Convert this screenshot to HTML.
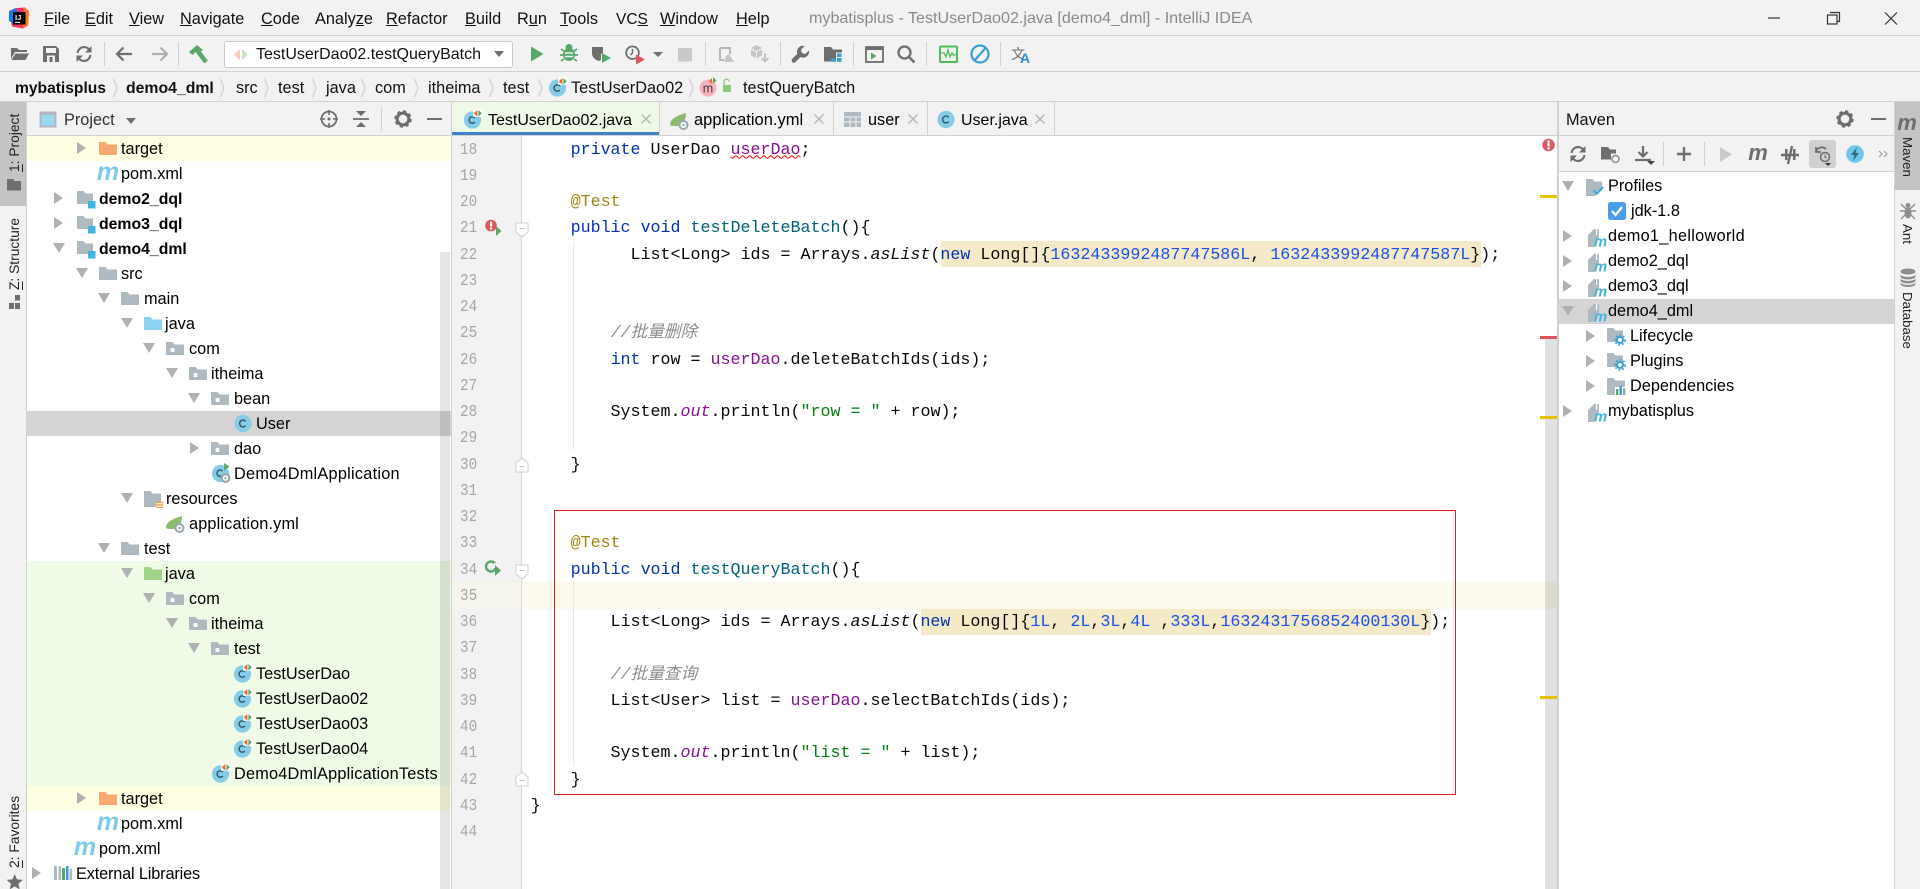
<!DOCTYPE html>
<html><head><meta charset="utf-8"><title>IntelliJ IDEA</title>
<style>
html,body{margin:0;padding:0;width:1920px;height:889px;overflow:hidden;background:#F2F2F2;font-family:"Liberation Sans","Noto Sans CJK SC",sans-serif;color:#000}
.b{position:absolute}
.t{position:absolute;white-space:nowrap;font-size:16.3px;line-height:25px}
.r{position:absolute;white-space:nowrap;font-size:16.3px;line-height:25px;height:25px;margin-top:1px}
.bo{font-weight:bold}
.mn{top:7px;color:#111}
.bc{top:76px;color:#111}
.tb{top:108px}
svg.o{position:absolute;left:0;top:0}
pre{position:absolute;margin:0;font-family:"Liberation Mono","Noto Sans CJK SC",monospace;white-space:pre}
#code{left:530.6px;top:137.6px;font-size:16.66px;line-height:26.25px;color:#080808}
#nums{left:460px;top:137.6px;font-size:17px;line-height:26.25px;color:#A6A6A6;transform:scaleX(.84);transform-origin:0 0}
.k{color:#0033B3}.n{color:#00627A}.a{color:#9E880D}.s{color:#067D17}.d{color:#1750EB}.f{color:#871094}.i{font-style:italic}.c{color:#8C8C8C;font-style:italic}
.w{text-decoration:underline wavy #f00 1px}
.vl{position:absolute;writing-mode:vertical-rl;transform:rotate(180deg);white-space:nowrap;font-size:13.8px;line-height:26px;width:26px;color:#222}
.vr{position:absolute;writing-mode:vertical-rl;white-space:nowrap;font-size:13.3px;line-height:26px;width:26px;color:#222}
</style></head><body>

<!-- structure lines -->
<div class="b" style="left:0;top:35px;width:1920px;height:1px;background:#D1D1D1"></div>
<div class="b" style="left:0;top:71px;width:1920px;height:1px;background:#D1D1D1"></div>
<div class="b" style="left:0;top:101px;width:1920px;height:1px;background:#D1D1D1"></div>
<div class="b" style="left:0;top:102px;width:26px;height:104px;background:#C4C4C4"></div>
<div class="b" style="left:26px;top:102px;width:1px;height:787px;background:#D1D1D1"></div>
<div class="b" style="left:1894px;top:102px;width:26px;height:88px;background:#C4C4C4"></div>
<div class="b" style="left:1894px;top:102px;width:1px;height:787px;background:#D1D1D1"></div>
<div class="b" style="left:27px;top:135px;width:1867px;height:1px;background:#D1D1D1"></div>

<!-- project panel -->
<div class="b" style="left:27px;top:136px;width:424px;height:753px;background:#fff"></div>
<div class="b" style="left:27px;top:136px;width:424px;height:25px;background:#FEFEE2"></div>
<div class="b" style="left:27px;top:411px;width:424px;height:25px;background:#D4D4D4"></div>
<div class="b" style="left:27px;top:561px;width:424px;height:225px;background:#EFFAE7"></div>
<div class="b" style="left:27px;top:786px;width:424px;height:25px;background:#FEFEE2"></div>
<div class="b" style="left:440px;top:252px;width:10px;height:637px;background:rgba(0,0,0,.1)"></div>
<div class="b" style="left:451px;top:102px;width:1px;height:787px;background:#D1D1D1"></div>

<!-- tabs -->
<div class="b" style="left:452px;top:102px;width:207px;height:33px;background:#EFF9E8"></div>
<div class="b" style="left:452px;top:132px;width:208px;height:3px;background:#4083C9"></div>
<div class="b" style="left:659px;top:102px;width:1px;height:33px;background:#D1D1D1"></div>
<div class="b" style="left:833px;top:102px;width:1px;height:33px;background:#D1D1D1"></div>
<div class="b" style="left:927px;top:102px;width:1px;height:33px;background:#D1D1D1"></div>
<div class="b" style="left:1054px;top:102px;width:1px;height:33px;background:#D1D1D1"></div>

<!-- editor -->
<div class="b" style="left:452px;top:136px;width:1105px;height:753px;background:#fff"></div>
<div class="b" style="left:452px;top:136px;width:69px;height:753px;background:#F2F2F2"></div>
<div class="b" style="left:521px;top:136px;width:1px;height:753px;background:#D5D5D5"></div>
<div class="b" style="left:452px;top:582px;width:69px;height:27px;background:#F6F5EC"></div>
<div class="b" style="left:522px;top:582px;width:1035px;height:27px;background:#FCFAED"></div>
<div class="b" style="left:573px;top:242px;width:1px;height:208px;background:#E8E8E8"></div>
<div class="b" style="left:573px;top:582px;width:1px;height:184px;background:#E8E8E8"></div>
<div class="b" style="left:940.6px;top:241px;width:540px;height:26px;background:#F5EAC8"></div>
<div class="b" style="left:920.6px;top:609px;width:510px;height:26px;background:#F5EAC8"></div>
<div class="b" style="left:1545px;top:337px;width:12px;height:552px;background:rgba(0,0,0,.12)"></div>
<div class="b" style="left:1557px;top:102px;width:2px;height:787px;background:#D1D1D1"></div>
<div class="b" style="left:1540px;top:195px;width:17px;height:3px;background:#E8C500"></div>
<div class="b" style="left:1540px;top:336px;width:17px;height:3px;background:#D9575C"></div>
<div class="b" style="left:1540px;top:416px;width:17px;height:3px;background:#E3C100"></div>
<div class="b" style="left:1540px;top:696px;width:17px;height:3px;background:#E3C100"></div>

<!-- maven panel -->
<div class="b" style="left:1559px;top:171px;width:335px;height:1px;background:#D1D1D1"></div>
<div class="b" style="left:1559px;top:172px;width:335px;height:717px;background:#fff"></div>
<div class="b" style="left:1559px;top:299px;width:335px;height:25px;background:#D4D4D4"></div>
<div class="b" style="left:1809px;top:140px;width:27px;height:28px;background:#D0D0D0;border-radius:3px"></div>

<!-- run config box -->
<div class="b" style="left:224px;top:41px;width:287px;height:25px;background:#fff;border:1px solid #C9C9C9;border-radius:3px"></div>

<!-- red annotation -->
<div class="b" style="left:554px;top:510px;width:900px;height:283px;border:1px solid #ED1C24"></div>

<svg class="o" width="1920" height="889" viewBox="0 0 1920 889" xmlns="http://www.w3.org/2000/svg">
<defs>
<symbol id="ar" viewBox="0 0 12 12"><polygon points="2,0 11,6 2,12" fill="#AFB1B3"/></symbol>
<symbol id="ad" viewBox="0 0 12 12"><polygon points="0,1 12,1 6,11" fill="#AFB1B3"/></symbol>
<symbol id="fo" viewBox="0 0 20 20"><path fill="#AEB9C0" d="M1 4h6.5l2 2.5H19V17H1z"/></symbol>
<symbol id="pk" viewBox="0 0 20 20"><path fill="#AEB9C0" d="M1 4h6.5l2 2.5H19V17H1z"/><rect x="5.5" y="10" width="4" height="4" rx="1" fill="#fff"/></symbol>
<symbol id="fm" viewBox="0 0 20 20"><path fill="#AEB9C0" d="M1 2h6.5l2 2.5H17V15H1z"/><rect x="12" y="12" width="7.5" height="7.5" fill="#40B6E0"/></symbol>
<symbol id="fj" viewBox="0 0 20 20"><path fill="#8CD3F0" d="M1 4h6.5l2 2.5H19V17H1z"/></symbol>
<symbol id="fg" viewBox="0 0 20 20"><path fill="#A0D589" d="M1 4h6.5l2 2.5H19V17H1z"/></symbol>
<symbol id="ft" viewBox="0 0 20 20"><path fill="#F9A870" d="M1 4h6.5l2 2.5H19V17H1z"/></symbol>
<symbol id="fr" viewBox="0 0 20 20"><path fill="#AEB9C0" d="M1 3h6.5l2 2.5H18V14h-5v5H1z"/><path stroke="#EDA23B" stroke-width="1.4" d="M13 14.5h7M13 17h7M13 19.4h7"/></symbol>
<symbol id="cl" viewBox="0 0 20 20"><circle cx="10" cy="10.5" r="8.6" fill="#85CCE6"/><path d="M12.6 8.3a3.4 3.4 0 1 0 0 4.4" fill="none" stroke="#34535F" stroke-width="1.4"/></symbol>
<symbol id="ct" viewBox="0 0 20 20"><circle cx="9.5" cy="11" r="8.6" fill="#85CCE6"/><path d="M11.8 9a3.2 3.2 0 1 0 0 4" fill="none" stroke="#34535F" stroke-width="1.4"/><path fill="#fff" d="M10 0h10v8H10z" opacity=".75"/><path fill="#F26522" d="M14.3 1v6.6l-3.4-3.3z"/><path fill="#59A869" d="M15.4 1v6.6l3.4-3.3z"/></symbol>
<symbol id="ca" viewBox="0 0 20 20"><circle cx="9.5" cy="10.5" r="8.6" fill="#85CCE6"/><path d="M11.5 8a3.2 3.2 0 1 0 0 4.4" fill="none" stroke="#34535F" stroke-width="1.4"/><path fill="#59A869" d="M13 0v7.5l5.5-3.7z"/><circle cx="14.5" cy="15" r="5" fill="#9AA7B0"/><circle cx="14.5" cy="15" r="2.8" fill="#fff"/><circle cx="14.5" cy="15" r="1.2" fill="#9AA7B0"/></symbol>
<symbol id="sp" viewBox="0 0 20 20"><path fill="#8DBA6E" d="M0 15C0 9 6 6 16 3c0 6-2 12-9 13-3 0-5.500 0-7-1z"/><circle cx="13.500" cy="15" r="5" fill="#9AA7B0"/><circle cx="13.500" cy="15" r="3" fill="#fff"/><circle cx="13.500" cy="15" r="1.300" fill="#9AA7B0"/></symbol>
<symbol id="pm" viewBox="0 0 22 20"><text x="11" y="17" text-anchor="middle" font-family="Liberation Sans" font-size="25" font-weight="bold" font-style="italic" fill="#7CCBEE">m</text></symbol>
<symbol id="mm" viewBox="0 0 20 20"><path fill="#AEB9C0" d="M1 8l6-6h5v11H8v7H1z"/><rect x="9" y="2" width="1.200" height="6" fill="#fff"/><text x="13.500" y="19.500" text-anchor="middle" font-family="Liberation Sans" font-size="15" font-weight="bold" font-style="italic" fill="#40B6E0">m</text></symbol>
<symbol id="fw" viewBox="0 0 20 20"><path fill="#AEB9C0" d="M1 2h6.500l2 2.500H17V14h-6v5H1z"/><path fill="none" stroke="#40A6E0" stroke-width="2.200" d="M9 13.500l3 3 6-6.500"/></symbol>
<symbol id="fs" viewBox="0 0 20 20"><path fill="#AEB9C0" d="M1 2h6.500l2 2.500H17V11h-6v5H1z"/><circle cx="14" cy="14" r="3" fill="none" stroke="#389FD6" stroke-width="2"/><circle cx="14" cy="14" r="5" fill="none" stroke="#389FD6" stroke-width="1.600" stroke-dasharray="1.800 2"/></symbol>
<symbol id="fd" viewBox="0 0 20 20"><path fill="#AEB9C0" d="M1 2h6.500l2 2.500H19V19H1z"/><rect x="9" y="11" width="11" height="9" fill="#fff"/><rect x="10" y="13" width="2.400" height="6" fill="#59A869"/><rect x="13.500" y="10" width="2.400" height="9" fill="#389FD6"/><rect x="17" y="12" width="2.400" height="7" fill="#9AA7B0"/></symbol>
<symbol id="x" viewBox="0 0 12 12"><path d="M1.500 1.500l9 9M10.500 1.500l-9 9" stroke="#B5B5B5" stroke-width="1.300"/></symbol>
<symbol id="gr" viewBox="0 0 20 20"><circle cx="10" cy="10" r="6.500" fill="none" stroke="#6E6E6E" stroke-width="3.400"/><circle cx="10" cy="10" r="8.200" fill="none" stroke="#6E6E6E" stroke-width="3" stroke-dasharray="3.400 3"/></symbol>
<symbol id="sy" viewBox="0 0 20 20"><path d="M3.600 9a6.500 6.500 0 0 1 11.600-3.400M16.400 11a6.500 6.500 0 0 1-11.600 3.400" fill="none" stroke="#6E6E6E" stroke-width="2.200"/><path fill="#6E6E6E" d="M17.500 2v6.500H11zM2.500 18v-6.500H9z"/></symbol>
<symbol id="fu" viewBox="0 0 14 16"><path d="M1 1h12v9l-6 5-6-5z" fill="#fff" stroke="#D0D0D0"/><path d="M4.500 6.500h5" stroke="#C0C0C0"/></symbol>
<symbol id="fv" viewBox="0 0 14 16"><path d="M1 15h12V6L7 1 1 6z" fill="#fff" stroke="#D0D0D0"/><path d="M4.500 9.500h5" stroke="#C0C0C0"/></symbol>
</defs>

<!-- logo -->
<path d="M9 11L16 8l9-0.500 4 4-1 14-5 3-11-2z" fill="#FE315D"/>
<path d="M24 7l5 5-1 13-5 3z" fill="#F97A12"/>
<path d="M9 12l6-4 3 4-4 12-5-3z" fill="#087CFA"/>
<rect x="13" y="12" width="12.500" height="12.500" fill="#000"/>
<text x="15" y="20" font-family="Liberation Sans" font-size="7.500" font-weight="bold" fill="#fff">IJ</text>
<rect x="15" y="21.800" width="5" height="1.100" fill="#fff"/>

<!-- window controls -->
<path d="M1768 18h12" stroke="#333" stroke-width="1.200"/>
<path d="M1830 12.500h9.500v9h-2.500" fill="none" stroke="#333" stroke-width="1.200"/>
<rect x="1827.500" y="15" width="9.500" height="9" fill="none" stroke="#333" stroke-width="1.200"/>
<path d="M1885 12.500l12 12M1897 12.500l-12 12" stroke="#333" stroke-width="1.200"/>

<!-- toolbar -->
<path fill="#6E6E6E" d="M11 48h6l2 2h8v2H15l-4 7z"/><path fill="#6E6E6E" d="M15.500 53.500H29l-3.500 6.500H11.500z"/>
<path fill="#6E6E6E" d="M43 46h13l3 3v13H43z"/><rect x="46" y="48" width="10" height="5" fill="#F2F2F2"/><rect x="47" y="55.500" width="8" height="6.500" fill="#F2F2F2"/><rect x="49.500" y="57" width="3" height="5" fill="#6E6E6E"/>
<use href="#sy" x="74" y="44" width="20" height="20"/>
<g fill="#D1D1D1"><rect x="104" y="42" width="1" height="24"/><rect x="178" y="42" width="1" height="24"/><rect x="705" y="42" width="1" height="24"/><rect x="780" y="42" width="1" height="24"/><rect x="853" y="42" width="1" height="24"/><rect x="926" y="42" width="1" height="24"/><rect x="1000" y="42" width="1" height="24"/><rect x="1663" y="142" width="1" height="24"/><rect x="1704" y="142" width="1" height="24"/><rect x="381" y="107" width="1" height="24"/></g>
<path d="M117 54h15M123.500 47.500L117 54l6.500 6.500" fill="none" stroke="#6E6E6E" stroke-width="2.200"/>
<path d="M167 54h-15M160.500 47.500L167 54l-6.500 6.500" fill="none" stroke="#AFAFAF" stroke-width="2.200"/>
<path d="M197 50l9 12" stroke="#59A869" stroke-width="4.500"/><path fill="#59A869" d="M189 52l8-7 6 5-4 2.500-3-1-3.500 3.500z"/>
<path fill="#F9CDBF" d="M240 49v11l-6-5.500z"/><path fill="#C8E6BE" d="M242 49v11l6-5.500z"/>
<path fill="#6E6E6E" d="M494 51h10l-5 6z"/>
<path fill="#59A869" d="M531 46.500v15l12.500-7.500z"/>
<g fill="#59A869"><ellipse cx="569" cy="54.500" rx="6" ry="6.500"/><circle cx="569" cy="47.500" r="3.500"/></g><path d="M561 49l3 2M577 49l-3 2M560 55h3M578 55h-3M561 61l3-2M577 61l-3-2" stroke="#59A869" stroke-width="1.700"/><path d="M565 53h8M565 56.500h8" stroke="#F2F2F2" stroke-width="1.500"/>
<path fill="#6E6E6E" d="M592 47h11v6l-2 1v6l-2 1c-4-1-7-4-7-8z"/><path fill="#59A869" d="M602 53v10l9-5z"/>
<circle cx="632.500" cy="52.700" r="6.300" fill="none" stroke="#6E6E6E" stroke-width="1.800"/><path d="M632.500 49v4l-2 2" fill="none" stroke="#6E6E6E" stroke-width="1.500"/><path fill="#DB5860" d="M636 54.500v10l9-5z"/>
<path fill="#6E6E6E" d="M653 52h10l-5 5z"/>
<rect x="678" y="48" width="14" height="13.500" fill="#C9C9C9"/>
<path d="M720 48h10v6M720 48v12h4" fill="none" stroke="#B8B8B8" stroke-width="2"/><path fill="#C6C6C6" d="M726 56l3-2 5 8h-10z"/>
<path fill="#C4C4C4" d="M751 48l5.500-3 5.500 3-5.500 3zM751 49.500l5 2.500v6l-5-2.500zM762 49.500l-5 2.500v6l5-2.500z"/><path d="M765 53v8M761.500 58l3.500 3.500 3.500-3.500" fill="none" stroke="#C0C0C0" stroke-width="1.800"/>
<path fill="#6E6E6E" d="M809 50.500l-3.800 3.500-3.200-1-1-3.200 3.600-3.800a6 6 0 0 0-7.300 7.700l-5 5c-1 1.200-1 2.300 0 3.300s2.200 1 3.200 0l5-5a6 6 0 0 0 8.500-6.500z"/>
<path fill="#6E6E6E" d="M824 47h7l2 2.500h9v3h-6v9h-12z"/><g fill="#389FD6"><rect x="837" y="53.500" width="4.500" height="3.500"/><rect x="831" y="58" width="4.500" height="3.800"/><rect x="837" y="58" width="4.500" height="3.800"/></g>
<rect x="866" y="47" width="17" height="15" fill="none" stroke="#6E6E6E" stroke-width="1.800"/><rect x="866" y="47" width="17" height="3" fill="#6E6E6E"/><path fill="#59A869" d="M871 52.500v7l5.500-3.500z"/>
<circle cx="904.500" cy="52.500" r="6" fill="none" stroke="#6E6E6E" stroke-width="2.300"/><path d="M909 57l5.500 5.500" stroke="#6E6E6E" stroke-width="2.500"/>
<rect x="940" y="46.500" width="17" height="15.500" rx="1" fill="none" stroke="#4DBE55" stroke-width="2"/><path d="M941 53h3l2 4 2-7 2 7 2-4 1.500 2.500 2.500-1.500" fill="none" stroke="#4DBE55" stroke-width="1.300"/>
<circle cx="980" cy="54" r="8.500" fill="none" stroke="#389FD6" stroke-width="2.200"/><path d="M975 60l10.500-12" stroke="#389FD6" stroke-width="2.200"/>
<text x="1011" y="59" font-family="Noto Sans CJK SC" font-size="14" fill="#6E6E6E">文</text><text x="1020" y="63" font-family="Liberation Sans" font-weight="bold" font-size="14" fill="#2E8FDB">A</text>

<!-- breadcrumb chevrons -->
<g fill="none" stroke="#C8C8C8" stroke-width="1"><path d="M113.500 79l3.500 9-3.500 9M220.500 79l3.500 9-3.500 9M264.500 79l3.500 9-3.500 9M312.500 79l3.500 9-3.500 9M361.500 79l3.500 9-3.500 9M414.500 79l3.500 9-3.500 9M489.500 79l3.500 9-3.500 9M538.500 79l3.500 9-3.500 9M689.500 79l3.500 9-3.500 9"/></g>
<use href="#ct" x="548" y="77" width="20" height="20"/>
<circle cx="708" cy="88" r="8.500" fill="#F6B3BE"/><text x="708" y="92.500" text-anchor="middle" font-family="Liberation Sans" font-size="12.500" fill="#4a3a3a">m</text><path fill="#F26522" d="M712 78v6l-3-3z"/><path fill="#59A869" d="M713 77v7l3.500-3.500z"/>
<rect x="723" y="85" width="8" height="7" fill="#8BC97A"/><path d="M724 85v-3a2.500 2.500 0 0 1 5-0.500" fill="none" stroke="#8BC97A" stroke-width="1.300"/>

<!-- project header -->
<rect x="39.500" y="111.500" width="17" height="16" fill="#AEB9C0"/><rect x="41.500" y="115" width="13" height="10.500" fill="#9AD7F2"/>
<path fill="#6E6E6E" d="M126 118h10l-5 6z"/>
<circle cx="329" cy="119" r="7.500" fill="none" stroke="#6E6E6E" stroke-width="1.800"/><path d="M329 110v5M329 123v5M320 119h5M333 119h5" stroke="#6E6E6E" stroke-width="1.600"/><circle cx="329" cy="119" r="1.500" fill="#6E6E6E"/>
<path d="M353 119h16" stroke="#6E6E6E" stroke-width="1.800"/><path fill="#6E6E6E" d="M356 111h10l-5 5zM356 127h10l-5-5z"/>
<use href="#gr" x="394" y="110" width="18" height="18"/>
<rect x="427" y="118" width="15" height="2" fill="#6E6E6E"/>

<!-- tab icons -->
<use href="#ct" x="463" y="109" width="20" height="20"/>
<use href="#x" x="640" y="113" width="12" height="12"/>
<use href="#sp" x="670" y="110" width="20" height="20"/>
<use href="#x" x="813" y="113" width="12" height="12"/>
<rect x="844" y="112" width="17" height="15" fill="#AEB9C0"/><path d="M844 117h17M844 122h17M850 117v10M856 117v10" stroke="#F2F2F2"/>
<use href="#x" x="907" y="113" width="12" height="12"/>
<use href="#cl" x="936" y="109" width="20" height="20"/>
<use href="#x" x="1034" y="113" width="12" height="12"/>

<!-- project tree arrows + icons -->
<use href="#ar" x="75" y="142" width="12" height="12"/><use href="#ft" x="98" y="138" width="20" height="20"/>
<use href="#pm" x="97" y="163" width="22" height="20"/>
<use href="#ar" x="52" y="192" width="12" height="12"/><use href="#fm" x="76" y="189" width="20" height="20"/>
<use href="#ar" x="52" y="217" width="12" height="12"/><use href="#fm" x="76" y="214" width="20" height="20"/>
<use href="#ad" x="53" y="242" width="12" height="12"/><use href="#fm" x="76" y="239" width="20" height="20"/>
<use href="#ad" x="76" y="267" width="12" height="12"/><use href="#fo" x="98" y="263" width="20" height="20"/>
<use href="#ad" x="98" y="292" width="12" height="12"/><use href="#fo" x="120" y="288" width="20" height="20"/>
<use href="#ad" x="121" y="317" width="12" height="12"/><use href="#fj" x="143" y="313" width="20" height="20"/>
<use href="#ad" x="143" y="342" width="12" height="12"/><use href="#pk" x="165" y="338" width="20" height="20"/>
<use href="#ad" x="166" y="367" width="12" height="12"/><use href="#pk" x="188" y="363" width="20" height="20"/>
<use href="#ad" x="188" y="392" width="12" height="12"/><use href="#pk" x="210" y="388" width="20" height="20"/>
<use href="#cl" x="233" y="413" width="20" height="20"/>
<use href="#ar" x="188" y="442" width="12" height="12"/><use href="#pk" x="210" y="438" width="20" height="20"/>
<use href="#ca" x="211" y="463" width="20" height="20"/>
<use href="#ad" x="121" y="492" width="12" height="12"/><use href="#fr" x="143" y="488" width="20" height="20"/>
<use href="#sp" x="166" y="513" width="20" height="20"/>
<use href="#ad" x="98" y="542" width="12" height="12"/><use href="#fo" x="120" y="538" width="20" height="20"/>
<use href="#ad" x="121" y="567" width="12" height="12"/><use href="#fg" x="143" y="563" width="20" height="20"/>
<use href="#ad" x="143" y="592" width="12" height="12"/><use href="#pk" x="165" y="588" width="20" height="20"/>
<use href="#ad" x="166" y="617" width="12" height="12"/><use href="#pk" x="188" y="613" width="20" height="20"/>
<use href="#ad" x="188" y="642" width="12" height="12"/><use href="#pk" x="210" y="638" width="20" height="20"/>
<use href="#ct" x="233" y="663" width="20" height="20"/>
<use href="#ct" x="233" y="688" width="20" height="20"/>
<use href="#ct" x="233" y="713" width="20" height="20"/>
<use href="#ct" x="233" y="738" width="20" height="20"/>
<use href="#ct" x="211" y="763" width="20" height="20"/>
<use href="#ar" x="75" y="792" width="12" height="12"/><use href="#ft" x="98" y="788" width="20" height="20"/>
<use href="#pm" x="97" y="813" width="22" height="20"/>
<use href="#pm" x="74" y="838" width="22" height="20"/>
<use href="#ar" x="30" y="867" width="12" height="12"/>
<g><rect x="54" y="866" width="3" height="14" fill="#AEB9C0"/><rect x="58.500" y="866" width="2.500" height="14" fill="#AEB9C0"/><rect x="62" y="868" width="3" height="12" fill="#59A869"/><rect x="66" y="866" width="2.500" height="14" fill="#389FD6"/><rect x="69.500" y="869" width="2.500" height="11" fill="#AEB9C0"/></g>

<!-- left strip icons -->
<path fill="#6E6E6E" d="M7 179h6l1.500 2H21v9.500H7z"/>
<g fill="#6E6E6E"><rect x="15" y="295" width="5" height="5.500"/><rect x="9" y="303" width="5" height="6"/><rect x="15" y="303" width="5" height="6"/></g>
<path fill="#6E6E6E" d="M14.700 874l2.300 5.400 5.800.5-4.400 3.800 1.300 5.700-5-3-5 3 1.300-5.700-4.400-3.800 5.800-.5z"/>

<!-- gutter icons -->
<circle cx="491" cy="225.500" r="5.800" fill="#DB5860"/><rect x="490" y="221.500" width="2.200" height="5" fill="#fff"/><rect x="490" y="227.500" width="2.200" height="2" fill="#fff"/><path fill="#59A869" d="M496 226v10l5.500-5z"/>
<use href="#fu" x="515" y="222" width="14" height="16"/>
<use href="#fv" x="515" y="457" width="14" height="16"/>
<circle cx="491" cy="566.500" r="5" fill="none" stroke="#59A869" stroke-width="2.400"/><path fill="#F2F2F2" d="M494 563h4v5h-4z"/><path fill="#59A869" d="M495 565v11l6-5.500z"/>
<use href="#fu" x="515" y="564" width="14" height="16"/>
<use href="#fv" x="515" y="771" width="14" height="16"/>
<circle cx="1548.500" cy="145" r="6.200" fill="#DB5860"/><rect x="1547.400" y="140.500" width="2.300" height="5.800" fill="#fff"/><rect x="1547.400" y="147.300" width="2.300" height="2.200" fill="#fff"/>

<!-- maven header/toolbar -->
<use href="#gr" x="1836" y="110" width="18" height="18"/>
<rect x="1871" y="118" width="15" height="2" fill="#6E6E6E"/>
<use href="#sy" x="1568" y="144" width="20" height="20"/>
<path fill="#6E6E6E" d="M1601 147h7l2 2.500h6v4h-5v6h-10z"/><circle cx="1615.500" cy="159" r="3.500" fill="none" stroke="#8A8A8A" stroke-width="1.500"/>
<path d="M1643 146v10M1638.500 152l4.500 4.500 4.500-4.500" fill="none" stroke="#6E6E6E" stroke-width="2.200"/><path d="M1635 160h16" stroke="#6E6E6E" stroke-width="2.200"/><path fill="#444" d="M1647 161h8l-4 4z"/>
<path d="M1684 147v14M1677 154h14" stroke="#6E6E6E" stroke-width="2.400"/>
<path fill="#C9C9C9" d="M1720 147v15l12-7.500z"/>
<text x="1758" y="160" text-anchor="middle" font-family="Liberation Sans" font-size="22" font-weight="bold" font-style="italic" fill="#6E6E6E">m</text>
<path d="M1781 155h18M1792 146l-4 18" stroke="#6E6E6E" stroke-width="2.400"/><rect x="1785" y="149" width="2.500" height="11" fill="#6E6E6E"/><rect x="1793" y="149" width="2.500" height="11" fill="#6E6E6E"/>
<path d="M1816 152a6 6 0 0 1 10-3M1816 147v5h5" fill="none" stroke="#6E6E6E" stroke-width="1.800"/><circle cx="1825" cy="157" r="4.500" fill="#D0D0D0" stroke="#6E6E6E" stroke-width="1.500"/><path d="M1825 154.500v3h2" fill="none" stroke="#6E6E6E"/><path fill="#333" d="M1825 163h6l-3 3z"/>
<circle cx="1855" cy="154" r="8.800" fill="#6FC8EA"/><path fill="#2F6B80" d="M1857 147l-6 8h3.500l-1.500 6 6-8h-3.500z"/>
<path d="M1879 151l3 3-3 3M1884 151l3 3-3 3" fill="none" stroke="#9A9A9A" stroke-width="1"/>

<!-- maven tree -->
<use href="#ad" x="1562" y="180" width="12" height="12"/><use href="#fw" x="1585" y="177" width="20" height="20"/>
<rect x="1608" y="202" width="18" height="18" rx="2.500" fill="#4A9EE8"/><path d="M1612 211l3.500 4 6.500-8" fill="none" stroke="#fff" stroke-width="2.200"/>
<use href="#ar" x="1561" y="230" width="12" height="12"/><use href="#mm" x="1587" y="227" width="20" height="20"/>
<use href="#ar" x="1561" y="255" width="12" height="12"/><use href="#mm" x="1587" y="252" width="20" height="20"/>
<use href="#ar" x="1561" y="280" width="12" height="12"/><use href="#mm" x="1587" y="277" width="20" height="20"/>
<use href="#ad" x="1562" y="305" width="12" height="12"/><use href="#mm" x="1587" y="302" width="20" height="20"/>
<use href="#ar" x="1584" y="330" width="12" height="12"/><use href="#fs" x="1606" y="326" width="20" height="20"/>
<use href="#ar" x="1584" y="355" width="12" height="12"/><use href="#fs" x="1606" y="351" width="20" height="20"/>
<use href="#ar" x="1584" y="380" width="12" height="12"/><use href="#fd" x="1606" y="376" width="20" height="20"/>
<use href="#ar" x="1561" y="405" width="12" height="12"/><use href="#mm" x="1587" y="402" width="20" height="20"/>

<!-- right strip icons -->
<text x="1907" y="130" text-anchor="middle" font-family="Liberation Sans" font-size="22" font-weight="bold" font-style="italic" fill="#6E6E6E">m</text>
<g fill="#8E8E8E"><ellipse cx="1908" cy="213" rx="3.500" ry="5.500"/><circle cx="1908" cy="205.500" r="2.500"/></g><path d="M1901 204l5 5M1915 204l-5 5M1900 211h16M1901 219l5-5M1915 219l-5-5" stroke="#8E8E8E" stroke-width="1.400"/>
<g fill="#8E8E8E"><ellipse cx="1908" cy="271.500" rx="7.500" ry="3"/><path d="M1900.500 274a7.500 3 0 0 0 15 0v2.500a7.500 3 0 0 1-15 0zM1900.500 278a7.500 3 0 0 0 15 0v2.500a7.500 3 0 0 1-15 0zM1900.500 282a7.500 3 0 0 0 15 0v2a7.500 3 0 0 1-15 0z"/></g>
</svg>

<!-- menu -->
<span class="t mn" style="left:44px"><u>F</u>ile</span>
<span class="t mn" style="left:85px"><u>E</u>dit</span>
<span class="t mn" style="left:129px"><u>V</u>iew</span>
<span class="t mn" style="left:180px"><u>N</u>avigate</span>
<span class="t mn" style="left:261px"><u>C</u>ode</span>
<span class="t mn" style="left:315px">Analy<u>z</u>e</span>
<span class="t mn" style="left:386px"><u>R</u>efactor</span>
<span class="t mn" style="left:465px"><u>B</u>uild</span>
<span class="t mn" style="left:517px">R<u>u</u>n</span>
<span class="t mn" style="left:560px"><u>T</u>ools</span>
<span class="t mn" style="left:616px;font-size:15.5px">VC<u>S</u></span>
<span class="t mn" style="left:660px"><u>W</u>indow</span>
<span class="t mn" style="left:736px"><u>H</u>elp</span>
<span class="t" style="left:809px;top:6px;font-size:16.1px;color:#8A8A8A">mybatisplus - TestUserDao02.java [demo4_dml] - IntelliJ IDEA</span>

<span class="t" style="left:256px;top:42px;font-size:16px;color:#111">TestUserDao02.testQueryBatch</span>

<!-- breadcrumb -->
<span class="t bc bo" style="left:15px;font-size:15.6px">mybatisplus</span>
<span class="t bc bo" style="left:126px;font-size:15.8px">demo4_dml</span>
<span class="t bc" style="left:236px">src</span>
<span class="t bc" style="left:278px">test</span>
<span class="t bc" style="left:326px">java</span>
<span class="t bc" style="left:375px">com</span>
<span class="t bc" style="left:428px">itheima</span>
<span class="t bc" style="left:503px">test</span>
<span class="t bc" style="left:571px">TestUserDao02</span>
<span class="t bc" style="left:743px">testQueryBatch</span>

<!-- tabs text -->
<span class="t" style="left:64px;top:108px;color:#333">Project</span>
<span class="t tb" style="left:488px;font-size:16px">TestUserDao02.java</span>
<span class="t tb" style="left:694px;font-size:16.5px">application.yml</span>
<span class="t tb" style="left:868px">user</span>
<span class="t tb" style="left:961px;font-size:16px">User.java</span>
<span class="t" style="left:1566px;top:108px;color:#111">Maven</span>

<!-- vertical labels -->
<div class="vl" style="left:2px;top:112px;height:60px"><u>1</u>: Project</div>
<div class="vl" style="left:2px;top:218px;height:72px"><u>Z</u>: Structure</div>
<div class="vl" style="left:2px;top:799px;height:69px"><u>2</u>: Favorites</div>
<div class="vr" style="left:1894px;top:137px;height:42px">Maven</div>
<div class="vr" style="left:1894px;top:224px;height:24px">Ant</div>
<div class="vr" style="left:1894px;top:292px;height:58px">Database</div>

<!-- tree text -->
<span class="r" style="left:121px;top:136px">target</span>
<span class="r" style="left:121px;top:161px">pom.xml</span>
<span class="r bo" style="left:99px;top:186px;font-size:15.8px">demo2_dql</span>
<span class="r bo" style="left:99px;top:211px;font-size:15.8px">demo3_dql</span>
<span class="r bo" style="left:99px;top:236px;font-size:15.8px">demo4_dml</span>
<span class="r" style="left:121px;top:261px">src</span>
<span class="r" style="left:144px;top:286px">main</span>
<span class="r" style="left:165px;top:311px">java</span>
<span class="r" style="left:189px;top:336px">com</span>
<span class="r" style="left:211px;top:361px">itheima</span>
<span class="r" style="left:234px;top:386px">bean</span>
<span class="r" style="left:256px;top:411px">User</span>
<span class="r" style="left:234px;top:436px">dao</span>
<span class="r" style="left:234px;top:461px;letter-spacing:.25px">Demo4DmlApplication</span>
<span class="r" style="left:166px;top:486px">resources</span>
<span class="r" style="left:189px;top:511px;letter-spacing:.15px">application.yml</span>
<span class="r" style="left:144px;top:536px">test</span>
<span class="r" style="left:165px;top:561px">java</span>
<span class="r" style="left:189px;top:586px">com</span>
<span class="r" style="left:211px;top:611px">itheima</span>
<span class="r" style="left:234px;top:636px">test</span>
<span class="r" style="left:256px;top:661px">TestUserDao</span>
<span class="r" style="left:256px;top:686px">TestUserDao02</span>
<span class="r" style="left:256px;top:711px">TestUserDao03</span>
<span class="r" style="left:256px;top:736px">TestUserDao04</span>
<span class="r" style="left:234px;top:761px;letter-spacing:.2px">Demo4DmlApplicationTests</span>
<span class="r" style="left:121px;top:786px">target</span>
<span class="r" style="left:121px;top:811px">pom.xml</span>
<span class="r" style="left:99px;top:836px">pom.xml</span>
<span class="r" style="left:76px;top:861px;letter-spacing:-.15px">External Libraries</span>

<!-- maven tree text -->
<span class="r" style="left:1608px;top:173px">Profiles</span>
<span class="r" style="left:1631px;top:198px">jdk-1.8</span>
<span class="r" style="left:1608px;top:223px;letter-spacing:.3px">demo1_helloworld</span>
<span class="r" style="left:1608px;top:248px">demo2_dql</span>
<span class="r" style="left:1608px;top:273px">demo3_dql</span>
<span class="r" style="left:1608px;top:298px">demo4_dml</span>
<span class="r" style="left:1630px;top:323px">Lifecycle</span>
<span class="r" style="left:1630px;top:348px">Plugins</span>
<span class="r" style="left:1630px;top:373px">Dependencies</span>
<span class="r" style="left:1608px;top:398px">mybatisplus</span>

<pre id="nums">18
19
20
21
22
23
24
25
26
27
28
29
30
31
32
33
34
35
36
37
38
39
40
41
42
43
44</pre>
<pre id="code">    <span class="k">private</span> UserDao <span class="f w">userDao</span>;

    <span class="a">@Test</span>
    <span class="k">public</span> <span class="k">void</span> <span class="n">testDeleteBatch</span>(){
          List&lt;Long&gt; ids = Arrays.<span class="i">asList</span>(<span class="k">new</span> Long[]{<span class="d">1632433992487747586L</span>, <span class="d">1632433992487747587L</span>});


        <span class="c">//批量删除</span>
        <span class="k">int</span> row = <span class="f">userDao</span>.deleteBatchIds(ids);

        System.<span class="f i">out</span>.println(<span class="s">"row = "</span> + row);

    }


    <span class="a">@Test</span>
    <span class="k">public</span> <span class="k">void</span> <span class="n">testQueryBatch</span>(){

        List&lt;Long&gt; ids = Arrays.<span class="i">asList</span>(<span class="k">new</span> Long[]{<span class="d">1L</span>, <span class="d">2L</span>,<span class="d">3L</span>,<span class="d">4L</span> ,<span class="d">333L</span>,<span class="d">1632431756852400130L</span>});

        <span class="c">//批量查询</span>
        List&lt;User&gt; list = <span class="f">userDao</span>.selectBatchIds(ids);

        System.<span class="f i">out</span>.println(<span class="s">"list = "</span> + list);
    }
}</pre>
</body></html>
